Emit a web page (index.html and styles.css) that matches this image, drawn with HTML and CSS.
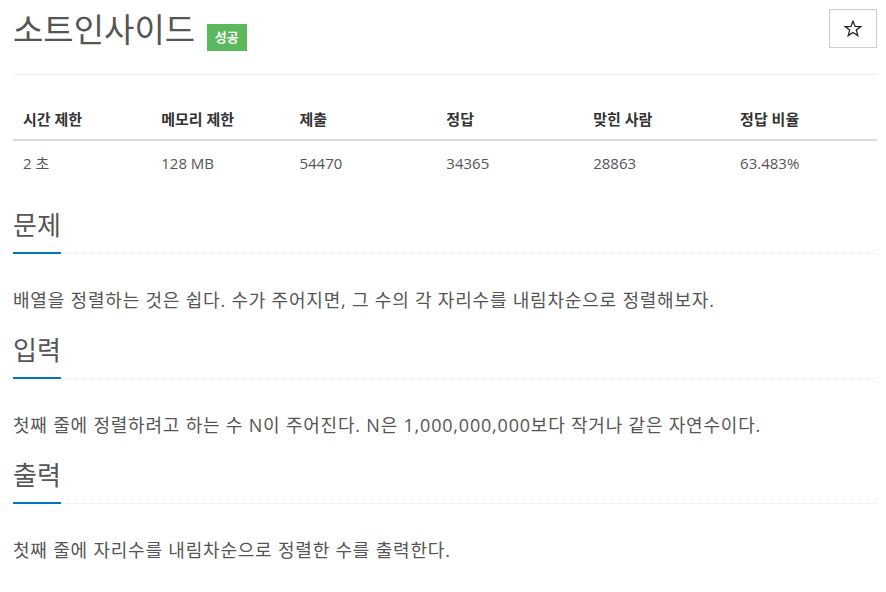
FILE: index.html
```html
<!DOCTYPE html>
<html lang="ko">
<head>
  <meta charset="UTF-8">
  <meta name="viewport" content="width=device-width, initial-scale=1.0">
  <title>소트인사이드</title>
  <link rel="stylesheet" href="styles.css">
</head>
<body>
  <div class="page">
    <div class="page-header">
      <h1 class="title">소트인사이드 <span class="label-success">성공</span></h1>
      <button class="star-btn" type="button" aria-label="즐겨찾기">
        <svg width="18" height="17" viewBox="0 0 18 17">
          <polygon points="9,1.2 11.1,6.4 16.7,6.6 12.3,10.1 13.8,15.6 9,12.5 4.2,15.6 5.7,10.1 1.3,6.6 6.9,6.4"
            fill="none" stroke="#222" stroke-width="1.3" stroke-linejoin="miter"/>
        </svg>
      </button>
    </div>

    <table class="info">
      <thead>
        <tr>
          <th class="w16">시간 제한</th>
          <th class="w16">메모리 제한</th>
          <th class="w17">제출</th>
          <th class="w17">정답</th>
          <th class="w17">맞힌 사람</th>
          <th class="w17">정답 비율</th>
        </tr>
      </thead>
      <tbody>
        <tr>
          <td>2 초</td>
          <td>128 MB</td>
          <td>54470</td>
          <td>34365</td>
          <td>28863</td>
          <td>63.483%</td>
        </tr>
      </tbody>
    </table>

    <!-- 문제 -->
    <section class="problem-section">
      <div class="headline"><h2>문제</h2></div>
      <p>배열을 정렬하는 것은 쉽다. 수가 주어지면, 그 수의 각 자리수를 내림차순으로 정렬해보자.</p>
    </section>

    <!-- 입력 -->
    <section class="problem-section">
      <div class="headline"><h2>입력</h2></div>
      <p>첫째 줄에 정렬하려고 하는 수 N이 주어진다. N은 1,000,000,000보다 작거나 같은 자연수이다.</p>
    </section>

    <!-- 출력 -->
    <section class="problem-section">
      <div class="headline"><h2>출력</h2></div>
      <p>첫째 줄에 자리수를 내림차순으로 정렬한 수를 출력한다.</p>
    </section>
  </div>
</body>
</html>
```

FILE: styles.css
```css
html, body {
  margin: 0;
  padding: 0;
  background: #fff;
}

body {
  font-family: "Open Sans", "Noto Sans CJK KR", sans-serif;
  color: #555;
}

.page {
  padding: 0 9px 0 13px;
}

/* 제목 */
.page-header {
  display: flex;
  justify-content: space-between;
  align-items: flex-start;
  padding-bottom: 23px;
  border-bottom: 1px solid #eee;
}

.title {
  margin: 10px 0 0;
  font-size: 33px;
  line-height: 40px;
  font-weight: 400;
  color: #555;
}

.label-success {
  display: inline-block;
  vertical-align: top;
  margin: 14px 0 0 3px;
  padding: 0 8px;
  height: 27px;
  line-height: 27px;
  font-size: 13px;
  font-weight: 700;
  color: #fff;
  background: #5cb85c;
}

.star-btn {
  display: flex;
  align-items: center;
  justify-content: center;
  margin-top: 9px;
  width: 48px;
  height: 39px;
  border: 1px solid #ccc;
  background: #fff;
  padding: 0;
}

/* 정보 표 */
.info {
  width: 100%;
  margin-top: 24px;
  border-collapse: collapse;
  font-size: 15px;
}

.info th, .info td {
  padding: 10px;
  line-height: 20px;
  text-align: left;
}

.info th {
  color: #333;
  font-weight: 700;
  border-bottom: 2px solid #ddd;
}

.info td {
  padding-top: 12px;
  padding-bottom: 8px;
  color: #555;
}

.w16 { width: 16%; }
.w17 { width: 17%; }

/* 본문 */
.problem-section {
  margin-top: 29px;
}

.problem-section + .problem-section {
  margin-top: 21px;
}

.headline {
  border-bottom: 1px dotted #e4e9f0;
  line-height: 0;
}

.headline h2 {
  display: inline-block;
  margin: 0 0 -1px;
  padding-bottom: 12px;
  font-size: 26px;
  line-height: 30px;
  font-weight: 400;
  color: #555;
  border-bottom: 2px solid #0076c0;
}

.problem-section p {
  margin: 33px 0 0;
  font-size: 18px;
  line-height: 27px;
  letter-spacing: 0.8px;
  color: #555;
}
```
